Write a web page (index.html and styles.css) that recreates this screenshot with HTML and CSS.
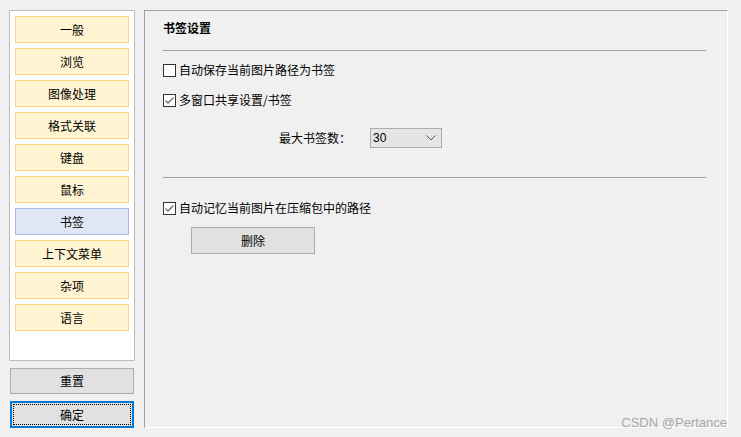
FILE: index.html
```html
<!DOCTYPE html>
<html lang="zh-CN">
<head>
<meta charset="utf-8">
<title>书签设置</title>
<link rel="stylesheet" href="styles.css">
</head>
<body>
<div class="window">
  <div class="sidebar">
    <div class="nav">
      <div class="nav-btn">一般</div>
      <div class="nav-btn">浏览</div>
      <div class="nav-btn">图像处理</div>
      <div class="nav-btn">格式关联</div>
      <div class="nav-btn">键盘</div>
      <div class="nav-btn">鼠标</div>
      <div class="nav-btn active">书签</div>
      <div class="nav-btn">上下文菜单</div>
      <div class="nav-btn">杂项</div>
      <div class="nav-btn">语言</div>
    </div>
    <div class="btn reset">重置</div>
    <div class="btn ok"><span class="focus">确定</span></div>
  </div>
  <div class="panel">
    <div class="title">书签设置</div>
    <div class="hline"></div>
    <label class="check row1"><span class="box"></span><span class="ctext">自动保存当前图片路径为书签</span></label>
    <label class="check row2"><span class="box"><svg width="11" height="11" viewBox="0 0 11 11"><polyline points="1.5,5.5 4,8 9.5,2.5" fill="none" stroke="#6a6a6a" stroke-width="1.3"/></svg></span><span class="ctext">多窗口共享设置/书签</span></label>
    <div class="select-row">
      <span class="slabel">最大书签数：</span>
      <div class="select"><span>30</span><svg width="10" height="6" viewBox="0 0 10 6"><polyline points="0.5,0.5 5,5 9.5,0.5" fill="none" stroke="#555" stroke-width="1"/></svg></div>
    </div>
    <div class="hline hline2"></div>
    <label class="check row3"><span class="box"><svg width="11" height="11" viewBox="0 0 11 11"><polyline points="1.5,5.5 4,8 9.5,2.5" fill="none" stroke="#6a6a6a" stroke-width="1.3"/></svg></span><span class="ctext">自动记忆当前图片在压缩包中的路径</span></label>
    <div class="btn del">删除</div>
  </div>
</div>
<div class="watermark">CSDN @Pertance</div>
</body>
</html>
```

FILE: styles.css
```css
html, body {
  margin: 0;
  padding: 0;
  background: #f0f0f0;
}
body {
  width: 741px;
  height: 437px;
  position: relative;
  overflow: hidden;
  font-family: "Noto Sans CJK SC", "Microsoft YaHei", sans-serif;
  font-size: 12px;
  color: #000;
}
.window {
  display: flex;
  padding: 10px 0 0 9px;
  gap: 9px;
}
.sidebar {
  display: flex;
  flex-direction: column;
  width: 126px;
}
.nav {
  box-sizing: border-box;
  width: 126px;
  height: 351px;
  background: #fff;
  border: 1px solid #bcbcbc;
  padding: 5px;
  display: flex;
  flex-direction: column;
  gap: 5px;
}
.nav-btn {
  box-sizing: border-box;
  height: 27px;
  background: #fff4d2;
  border: 1px solid #ffd27f;
  display: flex;
  align-items: center;
  justify-content: center;
  line-height: 1;
}
.nav-btn.active {
  background: #dfe6f4;
  border-color: #a5bde8;
}
.btn {
  box-sizing: border-box;
  background: #e1e1e1;
  border: 1px solid #adadad;
  display: flex;
  align-items: center;
  justify-content: center;
  line-height: 1;
}
.reset {
  width: 124px;
  height: 26px;
  margin: 7px 0 0 1px;
}
.ok {
  width: 124px;
  height: 27px;
  margin: 7px 0 0 1px;
  border: 2px solid #0078d7;
  padding: 1px;
}
.ok .focus {
  box-sizing: border-box;
  width: 100%;
  height: 100%;
  border: 1px dotted #000;
  display: flex;
  align-items: center;
  justify-content: center;
}
.panel {
  box-sizing: border-box;
  width: 584px;
  height: 418px;
  border-top: 1px solid #a0a0a0;
  border-left: 1px solid #a0a0a0;
  border-right: 1px solid #fff;
  border-bottom: 1px solid #fff;
  padding: 8px 0 0 18px;
  display: flex;
  flex-direction: column;
  align-items: flex-start;
}
.title {
  font-weight: bold;
  line-height: 18px;
  height: 18px;
}
.hline {
  width: 543px;
  height: 1px;
  background: #a0a0a0;
  margin-top: 13px;
}
.hline2 {
  margin-top: 29px;
}
.check {
  display: flex;
  align-items: center;
  height: 20px;
  line-height: 1;
}
.row1 { margin-top: 9px; }
.row2 { margin-top: 10px; }
.row3 { margin-top: 20px; }
.box {
  box-sizing: border-box;
  width: 13px;
  height: 13px;
  border: 1px solid #333;
  background: #fff;
  display: flex;
  align-items: center;
  justify-content: center;
}
.box svg { display: block; }
.ctext { margin-left: 3px; }
.select-row {
  display: flex;
  align-items: center;
  margin-top: 18px;
  margin-left: 116px;
  height: 20px;
}
.slabel {
  width: 91px;
  line-height: 1;
}
.select {
  box-sizing: border-box;
  width: 72px;
  height: 20px;
  background: #e5e5e5;
  border: 1px solid #acacac;
  display: flex;
  align-items: center;
  justify-content: space-between;
  padding: 0 5px 0 2px;
  font-family: "Liberation Sans", Arial, sans-serif;
  font-size: 12px;
}
.select svg { display: block; }
.del {
  width: 124px;
  height: 27px;
  margin: 9px 0 0 28px;
}
.watermark {
  position: absolute;
  right: 14px;
  bottom: 8px;
  font-family: "Liberation Sans", Arial, sans-serif;
  font-size: 13px;
  color: #a8a8a8;
  line-height: 1;
}
```
